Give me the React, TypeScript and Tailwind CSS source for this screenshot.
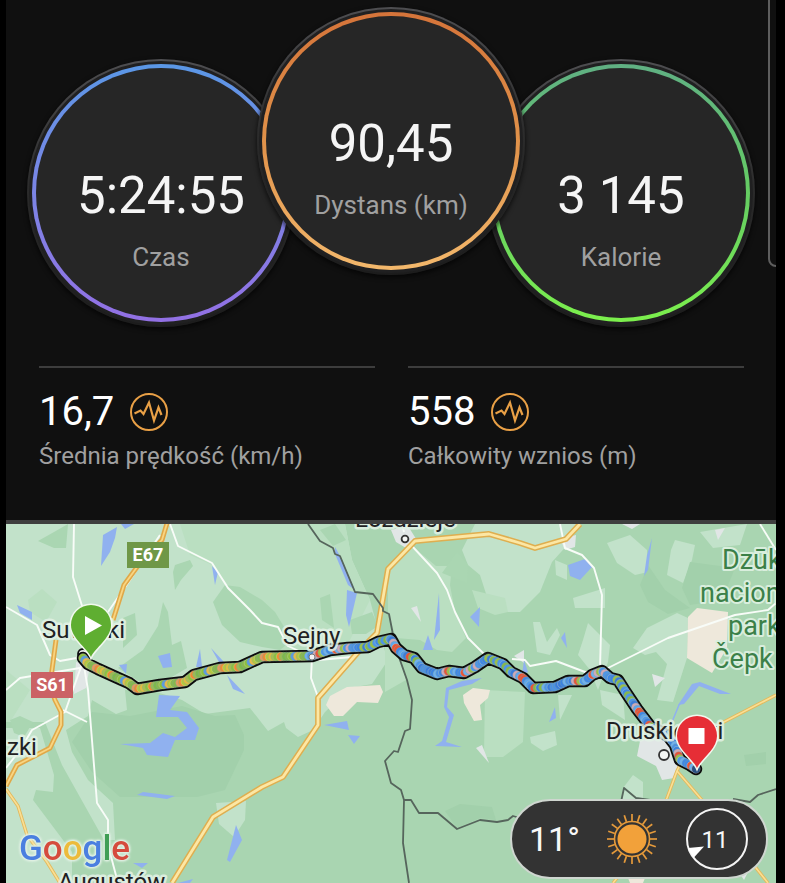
import React from "react";

const FONT = "Roboto, 'Noto Sans', sans-serif";

/* ---------- Summary dials ---------- */

type DialProps = { value: string; label: string; ring: string; className?: string };

function Dial({ value, label, ring, className = "" }: DialProps) {
  return (
    <div
      className={`size-[268px] shrink-0 rounded-full bg-linear-to-b from-[#4e4e51] via-[#2a2a2a] to-[#1c1c1c] p-[2px] shadow-[0_2px_4px_1px_rgba(0,0,0,0.55)] ${className}`}
    >
      <div className="size-full rounded-full bg-[#202021] p-[3px]">
        <div className={`size-full rounded-full p-[4px] ${ring}`}>
          <div className="flex size-full flex-col items-center rounded-full bg-[#262626] pt-[102px]">
            <span className="text-[51px] leading-[52px] text-[#f5f5f5]">{value}</span>
            <span className="mt-[19px] text-[26px] leading-8 text-[#a0a0a0]">{label}</span>
          </div>
        </div>
      </div>
    </div>
  );
}

/* ---------- Secondary stats ---------- */

function PulseIcon() {
  return (
    <svg viewBox="0 0 38 38" className="size-[38px]" fill="none" stroke="#e9a046" aria-hidden="true">
      <circle cx="19" cy="19" r="18" strokeWidth="2" />
      <path
        d="M4.5 20.5 L10.5 17.5 L13.5 21 L19 9.5 L24 27.5 L28.5 14.5 L31.5 22"
        strokeWidth="2.2"
        strokeLinejoin="miter"
      />
    </svg>
  );
}

function Stat({ value, label }: { value: string; label: string }) {
  return (
    <div className="border-t-2 border-[#3d3d3d] pt-6">
      <div className="flex items-center gap-4">
        <span className="text-[40px] leading-10 text-white">{value}</span>
        <PulseIcon />
      </div>
      <div className="mt-2 whitespace-nowrap text-[24px] leading-8 text-[#a0a0a0]">{label}</div>
    </div>
  );
}

/* ---------- Map ---------- */

const LIGHT = [
  "6,524 345,524 352,560 370,600 378,630 388,660 372,684 350,688 325,712 313,730 298,737 286,728 284,722 268,731 250,708 205,714 182,700 150,690 125,690 127,710 116,714 92,700 88,716 66,730 72,752 88,780 113,803 115,840 104,840 62,765 45,722 6,722",
  "40,728 54,775 53,792 36,790 33,800 72,852 72,883 6,883 6,728",
  "475,524 580,524 570,542 552,562 540,592 520,612 500,612 488,600 480,575 468,565 462,550",
  "555,560 567,565 567,580 556,575",
  "607,543 630,535 647,550 648,572 635,575 617,563",
  "675,540 695,545 692,560 683,583 667,575 671,550",
  "700,532 747,524 740,545 713,548",
  "573,598 605,588 605,608 575,608",
  "533,622 540,622 547,642 557,628 560,635 550,655 537,652",
  "588,623 610,645 608,662 598,690 590,670 578,655 583,640",
  "633,648 647,628 677,613 688,618 687,658 673,702 657,700 667,664 656,652 645,655",
  "530,737 555,731 557,745 543,751 531,743",
  "623,788 633,775 643,782 643,800 622,800",
  "558,695 572,695 560,720",
  "600,690 623,695 625,720 602,705",
  "216,803 246,801 245,820 234,837 219,824",
  "143,790 151,777 158,774 158,762 173,765 171,778 163,792",
];

const MID = [
  "180,524 345,524 352,560 370,600 350,640 330,652 278,650 262,624 240,600 212,565 190,555",
  "28,600 42,589 57,602 46,622 30,612",
  "388,569 412,546 436,566 452,566 450,585 455,612 466,638 452,652 437,650 420,640 396,638 388,612",
  "472,590 505,598 508,612 495,615 478,608",
  "385,640 396,650 406,680 385,692",
  "485,690 525,692 523,742 503,757 484,757",
  "172,749 190,751 182,764 168,760",
  "6,670 30,690 10,722 6,722",
];

const FOREST = [
  "38,541 54,532 68,524 66,548 54,548",
  "175,565 190,560 193,566 181,580 175,590 173,572",
  "213,602 225,585 240,587 262,600 275,612 292,640 280,650 262,647 240,642 222,625",
  "163,602 168,612 172,645 181,641 187,668 160,684 140,682 118,668 143,650 158,626",
  "123,618 135,613 137,635 123,648",
  "10,720 20,716 33,722 24,737 14,733",
  "320,530 335,524 346,540 333,546",
  "350,620 372,612 378,626 366,634 352,634",
  "457,552 468,565 467,583 442,573",
  "320,598 330,594 334,628 322,620",
];

const DEEP = [
  "72,742 92,712 130,716 182,706 215,716 235,715 244,735 244,750 225,790 197,797 120,797 92,772",
  "648,565 665,590 690,608 668,614 648,602 640,585",
  "690,562 735,568 722,600 690,605 682,588",
  "445,811 460,804 492,807 496,820 480,818 457,828",
  "744,755 766,752 766,764 746,766",
];

const CREAM = [
  "347,687 380,685 383,692 378,703 357,702 343,716 334,716 326,705 330,696",
  "463,695 473,688 490,690 488,698 480,705 482,720 474,721 464,703",
  "688,617 697,608 728,612 727,648 712,673 687,658",
  "628,878 645,878 643,883 630,883",
];

const URBAN = [
  "640,741 668,730 682,765 674,778 662,780 656,766 637,756",
  "391,530 408,526 418,542 406,548 396,542",
  "76,662 90,665 86,688 74,694",
  "560,539 576,535 575,547 565,550",
  "411,608 417,606 421,622",
  "652,674 665,678 655,687",
  "715,530 725,528 718,540",
  "476,748 482,745 489,763",
  "514,656 524,650 524,663",
  "622,524 640,524 632,529",
  "740,874 748,872 744,880",
];

const WATER = [
  "103,535 117,527 115,538 110,552 101,566",
  "121,524 134,524 125,529",
  "17,605 32,612 32,620 20,613",
  "212,566 218,572 215,585",
  "158,656 170,653 172,667 163,668",
  "119,665 127,664 126,674",
  "200,649 202,667 196,667",
  "211,648 224,662 220,664",
  "227,675 245,694 233,689",
  "159,695 180,696 170,710 187,712 199,728 195,740 175,740 168,757 147,755 143,748 120,744 150,743 163,733 175,737 187,728 178,717 156,717",
  "137,795 143,792 175,796 167,799",
  "236,825 242,840 230,862 227,860",
  "133,863 148,863 142,868",
  "178,883 193,879 190,883",
  "335,547 340,556 355,590 348,585 335,554",
  "347,590 357,593 349,627 346,615",
  "439,593 440,630 434,640",
  "428,635 433,650 423,650",
  "480,607 479,627 470,617",
  "324,725 347,721 349,730",
  "348,735 360,736 354,744",
  "568,565 585,559 592,567 580,580 570,576",
  "652,538 648,570 644,576 647,555",
  "565,632 567,648 561,638",
  "524,660 528,672 522,675",
  "678,705 692,684 700,682 731,694 720,694 699,686 684,704",
  "446,688 462,681 482,678 472,684 449,690 447,707 454,715 446,742 462,747 435,746 442,741 449,717 444,707",
  "555,707 556,718 549,722",
];

const WHITE_ROADS = [
  "74,524 73,577 88,625 83,660 88,690 97,803 108,820 108,845 118,883",
  "6,607 37,625 50,655 60,661 82,657",
  "160,535 130,580 108,612",
  "6,690 20,678 80,668",
  "170,524 178,546 212,563 228,588 250,610 262,623 278,627 288,646 312,657 311,678 318,697",
  "82,664 65,712 32,730 20,750 6,768",
  "63,710 87,722",
  "318,660 352,657",
  "402,524 404,532",
  "412,546 437,573 447,590 455,612 468,638 484,654",
  "512,659 525,660 530,666 556,661 585,672 598,672",
  "560,524 565,548 582,555 594,568 602,595 600,668",
  "604,670 620,662 668,638 735,615 768,610 776,603",
  "760,524 776,550",
];

const MAIN_ROADS = [
  "580,524 566,539 535,548 520,543 489,534 415,541 388,569 377,633 360,650 318,698 318,725 283,777 262,787 213,817 172,883",
];

const WEST_ROADS = [
  "168,520 162,540 140,563 124,585 113,620",
  "56,640 50,685 55,700 61,712 61,725 50,748 17,765 6,786",
];

const SIDE_ROADS = [
  "6,789 18,806 27,835 47,862 60,883",
  "776,695 720,724 690,745 677,771 667,798 648,840 613,883",
  "677,771 702,800 768,883",
];

const BORDERS = [
  "308,524 320,541 333,548 335,554 340,556 355,592 373,594 383,608 383,611 389,614 394,640 400,660 407,680 412,700 410,729 405,731 398,752 394,751 385,761 391,783 401,790 404,800 403,843 409,883",
  "404,800 411,800 419,813 438,813 457,829 480,820 497,822 508,820 513,816 520,818",
  "621,802 624,788 636,798 650,800",
  "733,799 750,802 758,795 776,789",
];

type Pt = [number, number];

const TRACK: Pt[] = [
  [83, 658], [88, 664], [98, 669], [120, 679], [129, 683], [137, 689], [160, 685], [185, 682], [194, 675],
  [220, 668], [240, 667], [262, 657], [312, 656], [330, 650], [348, 648], [368, 647], [378, 642],
  [391, 639], [396, 648], [404, 655], [414, 658], [422, 668], [437, 674], [449, 671], [464, 673], [475, 667],
  [488, 658], [503, 664], [511, 672], [523, 678], [533, 688], [555, 687], [568, 681], [585, 681],
  [592, 675], [602, 671], [610, 678], [618, 680], [625, 691], [637, 709], [650, 726], [668, 736],
  [675, 745], [680, 760], [690, 765], [696, 769],
];

const LEFT_TONES = ["#8dc03c", "#7dba48", "#e3bd3e", "#ef8a33", "#a9c04c", "#86b84a", "#b5c83c", "#e59a60", "#5c9ae0", "#8ab84c", "#e6ba4c", "#9cbc50"];
const RIGHT_TONES = ["#3f87e6", "#4c95ea", "#5ab08c", "#3a7bdc", "#86b84a", "#4f99ea", "#6fb0ee", "#ea5236", "#3b82e0", "#9ac04a", "#4a90e4", "#d0a8b8", "#5ca5ee"];

function trackBeads(step: number) {
  const beads: { x: number; y: number; tone: string }[] = [];
  let carry = 0;
  let n = 0;
  for (let i = 1; i < TRACK.length; i++) {
    const [x0, y0] = TRACK[i - 1];
    const [x1, y1] = TRACK[i];
    const len = Math.hypot(x1 - x0, y1 - y0);
    let d = carry;
    while (d < len) {
      const x = x0 + ((x1 - x0) * d) / len;
      const y = y0 + ((y1 - y0) * d) / len;
      const tones = x < 308 ? LEFT_TONES : RIGHT_TONES;
      beads.push({ x, y, tone: tones[(n * n * 3 + n * 5 + (n >> 2)) % tones.length] });
      n++;
      d += step;
    }
    carry = d - len;
  }
  return beads;
}

const BEADS = trackBeads(2.8);
const TRACK_LINE = TRACK.map((p) => p.join(",")).join(" ");

function Shapes({ list, fill }: { list: string[]; fill: string }) {
  return (
    <g fill={fill}>
      {list.map((p) => (
        <polygon key={p} points={p} />
      ))}
    </g>
  );
}

function Lines({ list, color, width }: { list: string[]; color: string; width: number }) {
  return (
    <g fill="none" stroke={color} strokeWidth={width} strokeLinejoin="round">
      {list.map((p) => (
        <polyline key={p} points={p} />
      ))}
    </g>
  );
}

function Place({ x, y, children }: { x: number; y: number; children: string }) {
  return (
    <text x={x} y={y} fontSize="24" fill="#1f2123" stroke="#e3f2e6" strokeOpacity="0.85" strokeWidth="5" strokeLinejoin="round" paintOrder="stroke">
      {children}
    </text>
  );
}

function RoadShield({ x, y, fill, children }: { x: number; y: number; fill: string; children: string }) {
  return (
    <g>
      <rect x={x} y={y} width="42" height="26" fill={fill} />
      <text x={x + 21} y={y + 19} textAnchor="middle" fontSize="18" fontWeight="700" fill="#fff">
        {children}
      </text>
    </g>
  );
}

function Pin({ x, y, fill, children }: { x: number; y: number; fill: string; children: React.ReactNode }) {
  return (
    <g transform={`translate(${x} ${y})`}>
      <path
        d="M0 0 C-4 -9 -20 -19 -20 -32 A20 20 0 0 1 20 -32 C20 -19 4 -9 0 0 Z"
        fill={fill}
        stroke="#f1f8ee"
        strokeWidth="3"
        paintOrder="stroke"
      />
      {children}
    </g>
  );
}

function RouteMap() {
  return (
    <svg
      viewBox="6 524 770 359"
      preserveAspectRatio="xMidYMid slice"
      className="block size-full"
      fontFamily={FONT}
      role="img"
      aria-label="Mapa trasy"
    >
      <rect x="-600" y="0" width="2000" height="1500" fill="#a9d5b1" />
      <Shapes list={LIGHT} fill="#c2e2ca" />
      <Shapes list={MID} fill="#badfc1" />
      <Shapes list={FOREST} fill="#aad6b2" />
      <Shapes list={DEEP} fill="#a2d0ab" />
      <Shapes list={CREAM} fill="#eee8db" />
      <Shapes list={URBAN} fill="#e1e6e6" />
      <Shapes list={WATER} fill="#90b1ef" />
      <polyline points="672,722 679,705 684,699" fill="none" stroke="#90b1ef" strokeWidth="1.5" />
      <Lines list={WHITE_ROADS} color="#f8fcf8" width={1.9} />
      <Lines list={SIDE_ROADS} color="#e2b95c" width={3.4} />
      <Lines list={SIDE_ROADS} color="#fadf94" width={1.6} />
      <Lines list={WEST_ROADS} color="#e0a848" width={5} />
      <Lines list={WEST_ROADS} color="#f8d582" width={1.8} />
      <Lines list={MAIN_ROADS} color="#dfae4f" width={5.8} />
      <Lines list={MAIN_ROADS} color="#fce7a4" width={2.8} />
      <Lines list={BORDERS} color="#56655c" width={1.8} />

      <g fill="#3b8048" stroke="#d9eedd" strokeWidth="4" strokeLinejoin="round" paintOrder="stroke" fontSize="27">
        <text x="722" y="569">Dzūk</text>
        <text x="700" y="602">nacion</text>
        <text x="728" y="635">park</text>
        <text x="712" y="668">Čepk</text>
      </g>

      <Place x={355} y={527}>Łoździeje</Place>
      <Place x={42} y={638}>Suwałki</Place>
      <Place x={7} y={755}>zki</Place>
      <Place x={58} y={890}>Augustów</Place>
      <RoadShield x={127} y={542} fill="#6f9747">E67</RoadShield>
      <RoadShield x={31} y={672} fill="#cb6265">S61</RoadShield>

      <circle cx="83" cy="654" r="5" fill="#eef1ee" stroke="#111" strokeWidth="1.8" />
      <polyline
        points={TRACK_LINE}
        fill="none"
        stroke="#0c0c0c"
        strokeWidth="12.5"
        strokeLinejoin="round"
        strokeLinecap="round"
      />
      {BEADS.map((b, i) => (
        <circle key={i} cx={b.x} cy={b.y} r="4.3" fill={b.tone} stroke={i % 4 ? "#7fa5a0" : "#c9d4b0"} strokeWidth="0.4" />
      ))}
      <circle cx="696" cy="769" r="4" fill="#274f80" />
      <Place x={283} y={644}>Sejny</Place>
      <circle cx="312" cy="657" r="3" fill="#f3f3f3" stroke="#777" strokeWidth="1" />

      <Place x={606} y={739}>Druskieniki</Place>
      <g fill="#f4f6f4" stroke="#333" strokeWidth="1.8">
        <circle cx="405" cy="539" r="3.4" />
        <circle cx="664" cy="755" r="5" />
      </g>

      <Pin x={91} y={657} fill="#5fae31">
        <path d="M-6 -41 L11 -31.500 L-6 -22 Z" fill="#fff" />
      </Pin>
      <Pin x={697} y={768} fill="#e62e36">
        <rect x="-8.500" y="-40" width="16" height="16" fill="#fff" />
      </Pin>

      <text
        x="19"
        y="860"
        fontSize="35"
        fontWeight="500"
        className="[filter:drop-shadow(0_0_1px_#e3f2e6)_drop-shadow(0_0_1px_#e3f2e6)_drop-shadow(0_0_1px_#e3f2e6)]"
      >
        <tspan fill="#4a7fe0">G</tspan>
        <tspan fill="#d54b3d">o</tspan>
        <tspan fill="#ecbb3c">o</tspan>
        <tspan fill="#4a7fe0">g</tspan>
        <tspan fill="#3f9e55">l</tspan>
        <tspan fill="#d54b3d">e</tspan>
      </text>
    </svg>
  );
}

/* ---------- Weather pill ---------- */

const RAYS = Array.from({ length: 20 }, (_, i) => i * 18);

function SunIcon() {
  return (
    <svg viewBox="-26 -26 52 52" className="size-[52px]" aria-hidden="true">
      <circle r="14.500" fill="#f2a13a" />
      <circle r="17.500" fill="none" stroke="#e59a3b" strokeWidth="1.6" />
      <g stroke="#e59a3b" strokeWidth="1.7">
        {RAYS.map((a) => (
          <line key={a} y1="-18" y2="-25" transform={`rotate(${a})`} />
        ))}
      </g>
    </svg>
  );
}

function WindGauge() {
  return (
    <svg viewBox="-32 -32 64 64" className="size-16" fontFamily={FONT} role="img" aria-label="Wiatr 11">
      <circle r="30" fill="none" stroke="#f4f4f4" strokeWidth="2" />
      <path d="M-29 9 L-13 7.500 L-23.500 19 Z" fill="#fff" />
      <text x="-2" y="9" textAnchor="middle" fontSize="24" fill="#f8f8f8">
        11
      </text>
    </svg>
  );
}

function WeatherPill() {
  return (
    <div className="absolute right-2 bottom-1 flex h-20 w-[258px] items-center justify-between rounded-full border-2 border-[#cfd6d0] bg-[#333333] px-[17px]">
      <span className="text-[34px] leading-10 text-[#f8f8f8]">11°</span>
      <SunIcon />
      <WindGauge />
    </div>
  );
}

export default function App() {
  return (
    <div className="min-h-screen bg-black pr-[9px] pl-[6px] font-[Roboto,'Noto_Sans',sans-serif]">
      <main className="flex flex-col">
        <section className="relative overflow-hidden bg-[#101010] pt-[7px] pb-[48px]">
          <div className="flex items-start justify-center">
            <Dial value="5:24:55" label="Czas" ring="bg-linear-to-b from-[#5a97e6] to-[#9270e4]" className="mt-[52px]" />
            <Dial value="90,45" label="Dystans (km)" ring="bg-linear-to-b from-[#d5743a] via-[#e0924a] to-[#f3b86c]" className="z-10 -mx-[38px]" />
            <Dial value="3 145" label="Kalorie" ring="bg-linear-to-b from-[#60b083] via-[#65cc62] to-[#7cf04c]" className="mt-[52px]" />
          </div>
          <div className="mt-[39px] grid grid-cols-2 gap-[33px] pr-8 pl-[33px]">
            <Stat value="16,7" label="Średnia prędkość (km/h)" />
            <Stat value="558" label="Całkowity wznios (m)" />
          </div>
          <div className="absolute -top-2 -right-2 h-[275px] w-4 rounded-bl-lg border-2 border-[#5e5e5e]" />
        </section>
        <section className="border-t-4 border-[#3f3f3f]">
          <div className="relative h-[359px] overflow-hidden">
            <RouteMap />
            <WeatherPill />
          </div>
        </section>
      </main>
    </div>
  );
}
